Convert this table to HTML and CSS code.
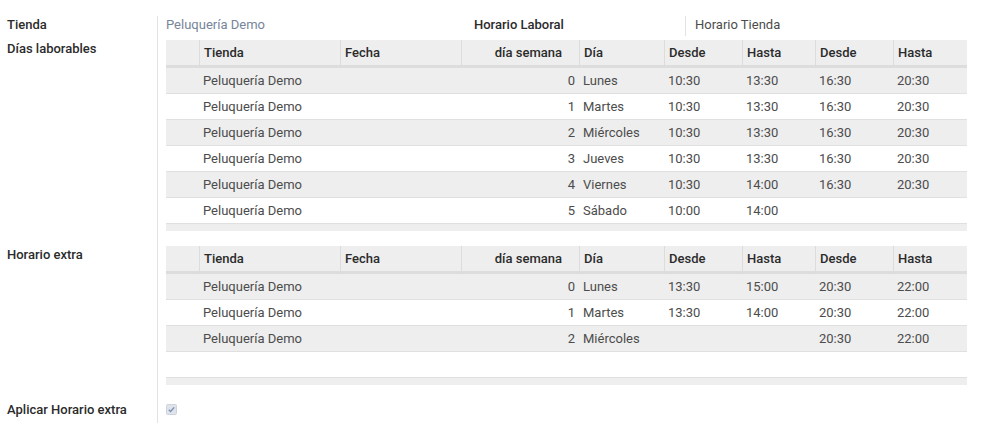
FILE: index.html
```html
<!DOCTYPE html>
<html lang="es">
<head>
<meta charset="utf-8">
<title>Horario</title>
<link rel="stylesheet" href="styles.css">
</head>
<body>
<div class="form">
  <div class="lbl row-top">Tienda</div>
  <div class="cell row-top">
    <div class="inner">
      <span class="link">Peluquería Demo</span>
      <span class="inner-lbl">Horario Laboral</span>
      <span class="inner-val">Horario Tienda</span>
    </div>
  </div>

  <div class="lbl row-t1">Días laborables</div>
  <div class="cell row-t1">
    <table class="list">
      <colgroup>
        <col class="c1"><col class="c2"><col class="c3"><col class="c4"><col class="c5"><col class="c6"><col class="c7"><col class="c8"><col class="c9">
      </colgroup>
      <thead>
        <tr><th class="first"></th><th>Tienda</th><th>Fecha</th><th class="num">día semana</th><th>Día</th><th>Desde</th><th>Hasta</th><th>Desde</th><th>Hasta</th></tr>
      </thead>
      <tbody>
        <tr><td></td><td>Peluquería Demo</td><td></td><td class="num">0</td><td>Lunes</td><td>10:30</td><td>13:30</td><td>16:30</td><td>20:30</td></tr>
        <tr><td></td><td>Peluquería Demo</td><td></td><td class="num">1</td><td>Martes</td><td>10:30</td><td>13:30</td><td>16:30</td><td>20:30</td></tr>
        <tr><td></td><td>Peluquería Demo</td><td></td><td class="num">2</td><td>Miércoles</td><td>10:30</td><td>13:30</td><td>16:30</td><td>20:30</td></tr>
        <tr><td></td><td>Peluquería Demo</td><td></td><td class="num">3</td><td>Jueves</td><td>10:30</td><td>13:30</td><td>16:30</td><td>20:30</td></tr>
        <tr><td></td><td>Peluquería Demo</td><td></td><td class="num">4</td><td>Viernes</td><td>10:30</td><td>14:00</td><td>16:30</td><td>20:30</td></tr>
        <tr><td></td><td>Peluquería Demo</td><td></td><td class="num">5</td><td>Sábado</td><td>10:00</td><td>14:00</td><td></td><td></td></tr>
      </tbody>
      <tfoot>
        <tr><td colspan="9"></td></tr>
      </tfoot>
    </table>
  </div>

  <div class="lbl row-t2">Horario extra</div>
  <div class="cell row-t2">
    <table class="list">
      <colgroup>
        <col class="c1"><col class="c2"><col class="c3"><col class="c4"><col class="c5"><col class="c6"><col class="c7"><col class="c8"><col class="c9">
      </colgroup>
      <thead>
        <tr><th class="first"></th><th>Tienda</th><th>Fecha</th><th class="num">día semana</th><th>Día</th><th>Desde</th><th>Hasta</th><th>Desde</th><th>Hasta</th></tr>
      </thead>
      <tbody>
        <tr><td></td><td>Peluquería Demo</td><td></td><td class="num">0</td><td>Lunes</td><td>13:30</td><td>15:00</td><td>20:30</td><td>22:00</td></tr>
        <tr><td></td><td>Peluquería Demo</td><td></td><td class="num">1</td><td>Martes</td><td>13:30</td><td>14:00</td><td>20:30</td><td>22:00</td></tr>
        <tr><td></td><td>Peluquería Demo</td><td></td><td class="num">2</td><td>Miércoles</td><td></td><td></td><td>20:30</td><td>22:00</td></tr>
        <tr><td></td><td></td><td></td><td></td><td></td><td></td><td></td><td></td><td></td></tr>
      </tbody>
      <tfoot>
        <tr><td colspan="9"></td></tr>
      </tfoot>
    </table>
  </div>

  <div class="lbl row-cb">Aplicar Horario extra</div>
  <div class="cell row-cb">
    <span class="checkbox">
      <svg width="11" height="11" viewBox="0 0 11 11">
        <rect x="0.5" y="0.5" width="10" height="10" rx="1" fill="#dfe4ec" stroke="#cfd4dc"/>
        <path d="M2.8 5.8 L4.6 7.5 L8.2 3.4" fill="none" stroke="#7f90b0" stroke-width="1.4"/>
      </svg>
    </span>
  </div>
</div>
</body>
</html>
```

FILE: styles.css
```css
html, body {
  margin: 0;
  padding: 0;
  background: #ffffff;
}

body {
  font-family: Roboto, "Liberation Sans", sans-serif;
  font-size: 13px;
  color: #4c4c4c;
}

.form {
  display: grid;
  grid-template-columns: 158px 801px;
  padding-top: 16px;
}

.lbl {
  box-sizing: border-box;
  border-right: 1px solid #e2e2e2;
  padding-left: 7px;
  font-weight: 500;
  color: #2b2b2b;
  line-height: 18px;
}

.cell {
  padding-left: 8px;
}

.row-top {
  height: 24px;
}

.row-t1 {
  padding-bottom: 15px;
}

.row-t2 {
  padding-bottom: 16px;
}

.row-cb {
  height: 22px;
}

.inner {
  display: grid;
  grid-template-columns: 308px 212px 1fr;
  height: 20px;
  line-height: 18px;
}

.link {
  color: #76859a;
}

.inner-lbl {
  font-weight: 500;
  color: #2b2b2b;
  border-right: 1px solid #e2e2e2;
}

.inner-val {
  padding-left: 9px;
}

.list {
  width: 801px;
  table-layout: fixed;
  border-collapse: separate;
  border-spacing: 0;
}

.c1 { width: 33px; }
.c2 { width: 141px; }
.c3 { width: 121px; }
.c4 { width: 118px; }
.c5 { width: 85px; }
.c6 { width: 78px; }
.c7 { width: 73px; }
.c8 { width: 78px; }
.c9 { width: 74px; }

.list th {
  background: #eeeeee;
  height: 25px;
  padding: 0 4px;
  text-align: left;
  font-weight: 500;
  color: #2b2b2b;
  border-left: 1px solid #dcdcdc;
  border-bottom: 3px solid #dddddd;
  white-space: nowrap;
  overflow: hidden;
}

.list th.first {
  border-left: none;
}

.list th.num {
  text-align: right;
  padding-right: 17px;
}

.list td {
  height: 25px;
  padding: 0 4px;
  border-bottom: 1px solid #e0e0e0;
  white-space: nowrap;
  overflow: hidden;
}

.list td.num {
  text-align: right;
}

.list tbody tr:nth-child(odd) td {
  background: #eeeeee;
}

.list tfoot td {
  height: 7px;
  padding: 0;
  border-bottom: none;
  background: #eeeeee;
}

.checkbox {
  display: block;
  width: 11px;
  height: 11px;
  margin-top: 3px;
}

.checkbox svg {
  display: block;
}
```
